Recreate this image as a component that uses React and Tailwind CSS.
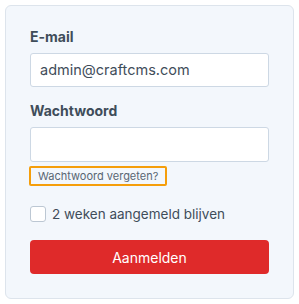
import React from 'react';

const App = () => {
  return (
    <div className="w-[299px] h-[304px] bg-white p-[5px]" style={{ fontFamily: 'Inter, "Noto Sans", sans-serif' }}>
      <div className="h-[294px] rounded-[6px] border border-[#dde4ec] bg-[#f3f7fc] px-[24px] pt-[21px]">
        <label className="block text-[14px] leading-[20px] font-bold text-[#3f4d5a]">E-mail</label>
        <div className="mt-[6px] h-[34px] rounded-[3px] border border-[#cdd8e4] bg-white px-[9px] flex items-center text-[14.5px] text-[#3f4d5a]">
          admin@craftcms.com
        </div>
        <label className="mt-[14px] block text-[14px] leading-[20px] font-bold text-[#3f4d5a]">Wachtwoord</label>
        <div className="mt-[6px] h-[35px] rounded-[3px] border border-[#cdd8e4] bg-white" />
        <div className="mt-[4px] inline-flex h-[20px] items-center rounded-[2px] border-2 border-[#f59e0b] px-[7px] text-[11px] text-[#596673] -ml-[1px]">
          Wachtwoord vergeten?
        </div>
        <div className="mt-[20px] flex items-center gap-[6px]">
          <span className="h-[16px] w-[16px] rounded-[3px] border border-[#bcc7d3] bg-white" />
          <span className="text-[13.5px] leading-[16px] text-[#3f4d5a]">2 weken aangemeld blijven</span>
        </div>
        <button className="mt-[18px] flex h-[34px] w-full items-center justify-center rounded-[4px] bg-[#df2a2a] text-[14px] text-white">
          Aanmelden
        </button>
      </div>
    </div>
  );
};

export default App;
